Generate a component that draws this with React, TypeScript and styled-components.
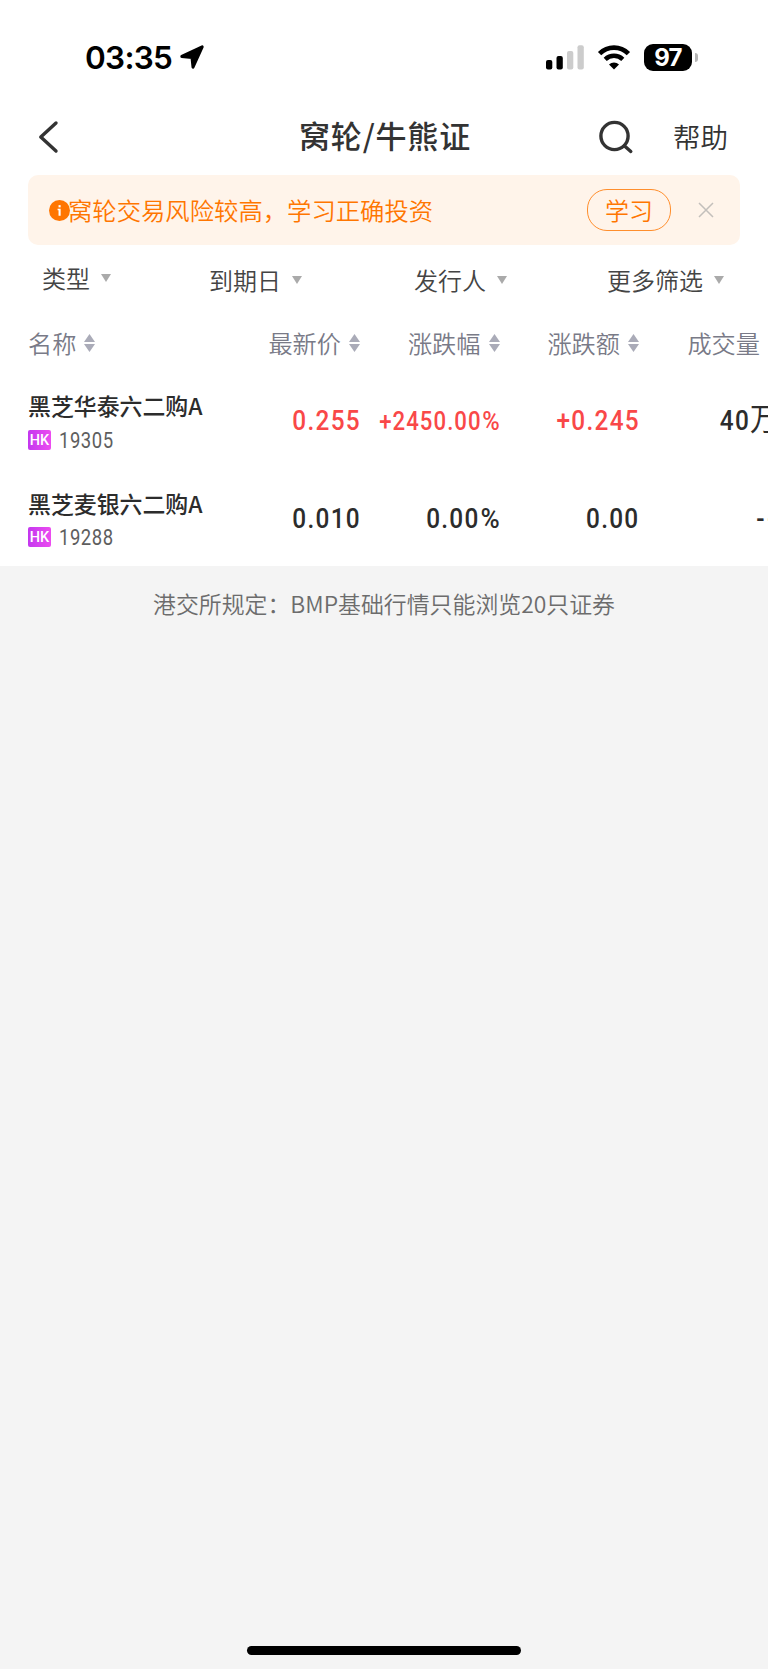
import React from 'react';
import styled, { createGlobalStyle } from 'styled-components';

const GlobalStyle = createGlobalStyle`
  * { box-sizing: border-box; }
  html, body { margin: 0; padding: 0; background: #f4f4f4; }
  body { font-family: "Noto Sans CJK SC", sans-serif; font-weight: 350; overflow: hidden; }
  button { font: inherit; background: none; border: 0; padding: 0; margin: 0; color: inherit; }
  svg { display: block; flex: none; }
`;

const Screen = styled.div`
  width: 768px;
  height: 1669px;
  display: flex;
  flex-direction: column;
  overflow: hidden;
  background: #f4f4f4;
`;

const Top = styled.div`
  height: 566px;
  flex: none;
  background: #fff;
`;

const StatusBar = styled.div`
  height: 101px;
  padding: 13px 70px 0 85px;
  display: flex;
  align-items: center;
  justify-content: space-between;
`;

const StatusLeft = styled.div`
  display: flex;
  align-items: center;
  gap: 5px;
`;

const Clock = styled.span`
  font: 600 31.5px/36px Inter, sans-serif;
  width: 89px;
  padding-top: 1px;
  letter-spacing: -0.7px;
  color: #000;
  white-space: nowrap;
`;

const StatusRight = styled.div`
  display: flex;
  align-items: center;
  gap: 13px;
`;

const Battery = styled.div`
  display: flex;
  align-items: center;
  gap: 3px;
`;

const BatteryBody = styled.span`
  width: 48px;
  height: 27px;
  border-radius: 9px;
  background: #000;
  color: #fff;
  font: 700 24px/27px Inter, sans-serif;
  letter-spacing: -0.8px;
  text-align: center;
`;

const BatteryNub = styled.span`
  width: 3px;
  height: 9px;
  border-radius: 0 4px 4px 0;
  background: #b5b5b5;
`;

const NavBar = styled.header`
  height: 74px;
  display: grid;
  grid-template-columns: 298px 174px 1fr;
  align-items: center;
  padding: 0 40px 3px 0;
  color: #333;
`;

const Back = styled.button`
  padding-left: 37px;
`;

const Title = styled.h1`
  margin: 0;
  padding-bottom: 3px;
  font-size: 31px;
  line-height: 44px;
  font-weight: 500;
  letter-spacing: 0.8px;
  text-align: center;
  white-space: nowrap;
`;

const NavActions = styled.div`
  display: flex;
  align-items: center;
  justify-content: flex-end;
  gap: 39px;
`;

const Help = styled.button`
  padding-bottom: 2px;
  font-size: 27.5px;
  line-height: 40px;
`;

const Banner = styled.div`
  height: 70px;
  margin: 0 28px;
  padding: 0 26px 0 21px;
  display: flex;
  align-items: center;
  border-radius: 10px;
  background: #fff4ea;
  color: #ff7600;
`;

const BannerText = styled.span`
  flex: 1;
  margin-left: -2px;
  font-size: 24.35px;
  line-height: 36px;
  white-space: nowrap;
`;

const LearnButton = styled.button`
  && { border: 1.5px solid #ff8e2c; }
  width: 84px;
  height: 42px;
  margin-right: 27px;
  border-radius: 20px;
  font-size: 24px;
  line-height: 38px;
`;

const Filters = styled.div`
  height: 68px;
  padding: 1px 0 0 42px;
  display: grid;
  grid-template-columns: 167px 205px 193px 1fr;
  align-items: center;
`;

const Filter = styled.button<{ $raised?: boolean }>`
  display: flex;
  align-items: center;
  gap: 10.5px;
  padding-bottom: ${(p) => (p.$raised ? 3 : 0)}px;
  color: #444;
  font-size: 24px;
  line-height: 36px;
  white-space: nowrap;
`;

const grid = `
  display: grid;
  grid-template-columns: 180px 152px 139.5px 139.5px 138px;
  padding-left: 28px;
  width: 800px;
`;

const TableHead = styled.div`
  ${grid}
  height: 60px;
  align-items: center;
`;

const HeadCell = styled.button<{ $align?: 'left' | 'right' }>`
  display: flex;
  align-items: center;
  justify-content: ${(p) => (p.$align === 'left' ? 'flex-start' : 'flex-end')};
  gap: 8px;
  color: #797a87;
  font-size: 24.2px;
  line-height: 36px;
  white-space: nowrap;
`;

const VolumeHead = styled(HeadCell)`
  padding-right: 17px;
`;

const Row = styled.div`
  ${grid}
  height: 97.7px;
`;

const Name = styled.div`
  color: #2c2c2c;
  font-size: 22.9px;
  line-height: 34px;
  font-weight: 500;
  white-space: nowrap;
  padding-top: 15px;
`;

const CodeLine = styled.div`
  display: flex;
  align-items: center;
  gap: 8px;
  height: 35px;
`;

const Market = styled.span`
  width: 23px;
  height: 20px;
  border-radius: 2px;
  background: linear-gradient(90deg, #c437ef, #ec4cf0);
  color: #fff;
  font: 500 14.5px/22px Roboto, sans-serif;
  text-align: center;
`;

const Code = styled.span`
  color: #5e5e5e;
  font: 400 21.5px/24px Roboto, sans-serif;
  letter-spacing: 0.6px;
  padding-top: 2px;
  transform: scaleX(0.86);
  transform-origin: left;
`;

const Value = styled.div<{ $up?: boolean; $small?: boolean }>`
  padding-top: 31px;
  margin-right: -1px;
  justify-self: end;
  color: ${(p) => (p.$up ? '#f94848' : '#2c2c2c')};
  font-family: Roboto, "Noto Sans CJK SC", sans-serif;
  font-size: ${(p) => (p.$small ? 25.5 : 28)}px;
  font-weight: 500;
  line-height: 34px;
  letter-spacing: ${(p) => (p.$small ? 1.2 : 1.5)}px;
  white-space: nowrap;
  transform: scaleX(0.87);
  transform-origin: right;
`;

const Percent = styled.span`
  display: inline-block;
  transform: scaleX(1.07);
  transform-origin: right;
  margin-left: 2px;
`;

const Dashes = styled.span`
  letter-spacing: 3px;
`;

const Unit = styled.span`
  font-size: 31px;
  line-height: 1;
  font-weight: 400;
`;

const Notice = styled.p`
  margin: 20px 0 0;
  text-align: center;
  color: #6c6c6c;
  font-size: 22.9px;
  line-height: 34px;
`;

const HomeIndicator = styled.div`
  width: 274px;
  height: 9px;
  margin: auto auto 14.5px 247px;
  border-radius: 5px;
  background: #000;
`;

const LocationArrow = () => (
  <svg width="26" height="26" viewBox="0 0 26 26">
    <path d="M23.2 2.8 14 23.2 13 13.6 2.8 12.4Z" fill="#000" stroke="#000" strokeWidth="3" strokeLinejoin="round" />
  </svg>
);

const Signal = () => (
  <svg width="38" height="25" viewBox="0 0 38 25">
    <rect x="0" y="15" width="6.3" height="9.5" rx="2" />
    <rect x="10.5" y="11" width="6.3" height="13.5" rx="2" />
    <rect x="21" y="6" width="6.3" height="18.5" rx="2" fill="#ccc" />
    <rect x="31.5" y="0.3" width="6.3" height="24.2" rx="2" fill="#ccc" />
  </svg>
);

const Wifi = () => (
  <svg width="34" height="25" viewBox="0 0 34 25">
    <path d="M2.6 8.6C10.7 .6 23.3 .6 31.4 8.6" fill="none" stroke="#000" strokeWidth="4.7" />
    <path d="M8.2 14.3C13.2 9.6 20.8 9.6 25.8 14.3" fill="none" stroke="#000" strokeWidth="4.5" />
    <path d="M17 24.4 12 19.5C14.9 16.8 19.1 16.8 22 19.5Z" />
  </svg>
);

const Chevron = () => (
  <svg width="22" height="34" viewBox="0 0 22 34" fill="none" stroke="#333" strokeWidth="3.4" strokeLinecap="round" strokeLinejoin="round">
    <path d="M19 3 3.8 17 19 31" />
  </svg>
);

const SearchIcon = () => (
  <svg width="36" height="34" viewBox="0 0 36 34" fill="none" stroke="#333" strokeWidth="3.4" strokeLinecap="round">
    <circle cx="16.5" cy="16" r="13.6" />
    <path d="m26.3 25.8 6.5 5.7" />
  </svg>
);

const Info = () => (
  <svg width="21" height="21" viewBox="0 0 22 22">
    <circle cx="11" cy="11" r="11" fill="#ff7600" />
    <rect x="10" y="5.4" width="2.2" height="2.3" fill="#fff" />
    <path d="M9 9.2h3.2v7.2H10v-5.6H9Z" fill="#fff" />
  </svg>
);

const Close = () => (
  <svg width="16" height="16" viewBox="0 0 16 16" stroke="#c3bfbb" strokeWidth="1.5">
    <path d="m1 1 14 14M15 1 1 15" />
  </svg>
);

const Caret = () => (
  <svg width="10" height="8" viewBox="0 0 10 8" fill="#aaa">
    <path d="M0 0h10L5 8Z" />
  </svg>
);

const Sorter = () => (
  <svg width="11" height="18" viewBox="0 0 11 18" fill="#aaabb8">
    <path d="M5.5 0 11 8H0ZM0 10h11L5.5 18Z" />
  </svg>
);

const filters = ['类型', '到期日', '发行人', '更多筛选'];
const columns = ['最新价', '涨跌幅', '涨跌额'];
const rows = [
  { name: '黑芝华泰六二购A', code: '19305', up: true, price: '0.255', pct: '+2450.00', change: '+0.245', volume: '40', unit: '万' },
  { name: '黑芝麦银六二购A', code: '19288', up: false, price: '0.010', pct: '0.00', change: '0.00', volume: '', unit: '' },
];

export default function App() {
  return (
    <Screen>
      <GlobalStyle />
      <Top>
        <StatusBar>
          <StatusLeft>
            <Clock>03:35</Clock>
            <LocationArrow />
          </StatusLeft>
          <StatusRight>
            <Signal />
            <Wifi />
            <Battery>
              <BatteryBody>97</BatteryBody>
              <BatteryNub />
            </Battery>
          </StatusRight>
        </StatusBar>
        <NavBar>
          <Back aria-label="返回"><Chevron /></Back>
          <Title>窝轮/牛熊证</Title>
          <NavActions>
            <SearchIcon />
            <Help>帮助</Help>
          </NavActions>
        </NavBar>
        <Banner>
          <Info />
          <BannerText>窝轮交易风险较高，学习正确投资</BannerText>
          <LearnButton>学习</LearnButton>
          <Close />
        </Banner>
        <Filters>
          {filters.map((label, i) => (
            <Filter key={label} $raised={i === 0}>{label}<Caret /></Filter>
          ))}
        </Filters>
        <TableHead>
          <HeadCell $align="left">名称<Sorter /></HeadCell>
          {columns.map((label) => (
            <HeadCell key={label}>{label}<Sorter /></HeadCell>
          ))}
          <VolumeHead $align="right">成交量</VolumeHead>
        </TableHead>
        {rows.map((r) => (
          <Row key={r.code}>
            <div>
              <Name>{r.name}</Name>
              <CodeLine><Market>HK</Market><Code>{r.code}</Code></CodeLine>
            </div>
            <Value $up={r.up}>{r.price}</Value>
            <Value $up={r.up} $small={r.pct.length > 7}>{r.pct}<Percent>%</Percent></Value>
            <Value $up={r.up}>{r.change}</Value>
            <Value>{r.volume ? <>{r.volume}<Unit>{r.unit}</Unit></> : <Dashes>--</Dashes>}</Value>
          </Row>
        ))}
      </Top>
      <Notice>港交所规定：BMP基础行情只能浏览20只证券</Notice>
      <HomeIndicator />
    </Screen>
  );
}
